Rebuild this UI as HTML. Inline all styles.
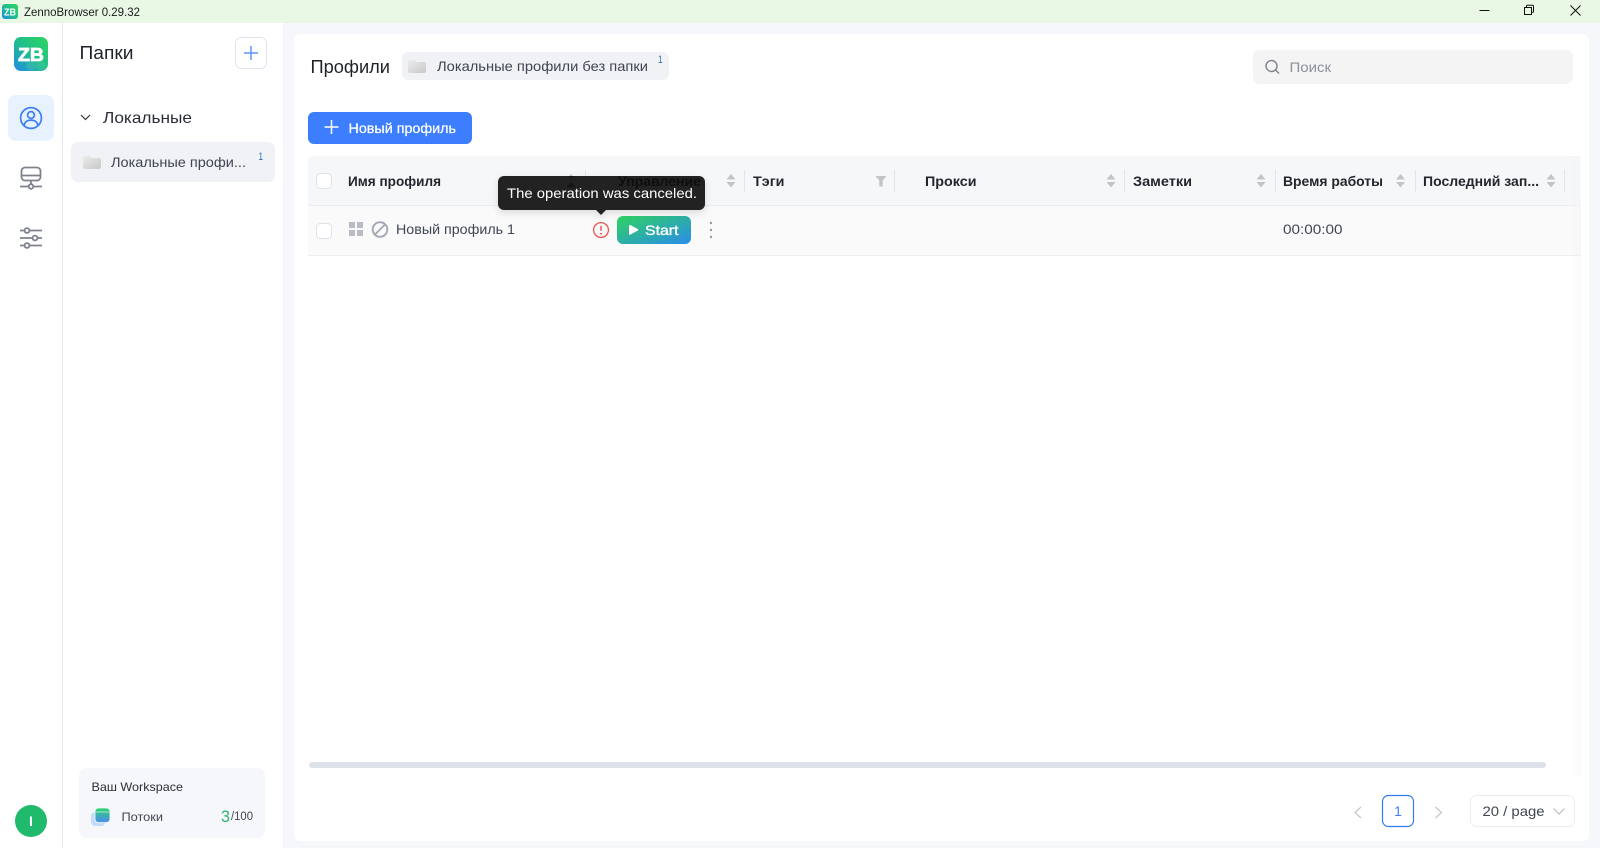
<!DOCTYPE html>
<html lang="ru">
<head>
<meta charset="utf-8">
<title>ZennoBrowser</title>
<style>
html,body{margin:0;padding:0;width:1600px;height:848px;overflow:hidden;background:#f6f7fa}
svg{display:block}
text{font-family:"Liberation Sans",sans-serif;white-space:pre}
</style>
</head>
<body>
<svg xmlns="http://www.w3.org/2000/svg" width="1600" height="848" viewBox="0 0 1600 848">
<defs>
<linearGradient id="lg" x1="1" y1="0" x2="0" y2="1"><stop offset="0" stop-color="#2fd65f"/><stop offset=".5" stop-color="#1fbf8a"/><stop offset="1" stop-color="#1f8ae8"/></linearGradient>
<linearGradient id="fo" x1="0" y1="0" x2="1" y2="1"><stop offset="0" stop-color="#ececec"/><stop offset="1" stop-color="#c8c8c8"/></linearGradient>
<linearGradient id="st" x1="0" y1="0" x2="1" y2="1"><stop offset="0" stop-color="#2fd35f"/><stop offset="1" stop-color="#2a8cec"/></linearGradient>
<linearGradient id="th" x1="0" y1="0" x2="0" y2="1"><stop offset="0" stop-color="#2bd46a"/><stop offset="1" stop-color="#4a8df0"/></linearGradient>
<linearGradient id="fade" x1="0" y1="0" x2="1" y2="0"><stop offset="0" stop-color="#f2f3f6" stop-opacity="0"/><stop offset="1" stop-color="#eef0f3"/></linearGradient>
<filter id="sh" x="-10%" y="-30%" width="120%" height="170%"><feDropShadow dx="0" dy="3" stdDeviation="4" flood-color="#000" flood-opacity=".12"/></filter>
</defs>

<!-- title bar -->
<rect width="1600" height="23" fill="#e9f8e4"/>
<rect x="2" y="4" width="16" height="15" rx="3" fill="url(#lg)"/>
<text x="4" y="15.500" font-size="10.500" font-weight="700" fill="#fff" textLength="12" lengthAdjust="spacingAndGlyphs">ZB</text>
<text x="24" y="16" font-size="12" fill="#1b1b1b" textLength="116" lengthAdjust="spacingAndGlyphs">ZennoBrowser 0.29.32</text>
<path d="M1479.500 10.500h10" stroke="#111" stroke-width="1" fill="none"/>
<path d="M1524.500 7.500h7v7h-7zM1526.500 7.500v-1.500q0-.7.7-.7h5.200q1.100 0 1.100 1.100v5.200q0 .7-.7.7h-1.300" stroke="#111" stroke-width="1" fill="none"/>
<path d="M1570.500 5.500l10 10M1580.500 5.500l-10 10" stroke="#111" stroke-width="1" fill="none"/>

<!-- left nav -->
<rect x="0" y="23" width="62" height="825" fill="#fff"/>
<rect x="62" y="23" width="1" height="825" fill="#e6e8ec"/>
<rect x="14" y="37" width="34" height="34" rx="7" fill="url(#lg)"/>
<circle cx="31" cy="66" r="5" fill="#fff" opacity=".08"/><circle cx="41" cy="66" r="5" fill="#fff" opacity=".08"/>
<text x="18" y="61" font-size="18" font-weight="700" fill="#fff" stroke="#fff" stroke-width=".7" textLength="26" lengthAdjust="spacingAndGlyphs">ZB</text>
<rect x="8" y="95" width="46" height="46" rx="8" fill="#e8f1fe"/>
<g fill="none" stroke="#3d7ef5" stroke-width="1.700">
<circle cx="31" cy="118" r="10.400"/>
<circle cx="31" cy="115" r="3.400"/>
<path d="M24 125.500c.6-3.600 3.400-5.400 7-5.400s6.400 1.800 7 5.400"/>
</g>
<g fill="none" stroke="#7d828c" stroke-width="1.800">
<rect x="21.500" y="167.500" width="19" height="13" rx="3.500"/>
<path d="M22 175.500h18M31 181v3M20 186.500h8M34 186.500h8"/>
<circle cx="31" cy="186.500" r="2.300"/>
<path d="M20 230.500h4.500M29.500 230.500h12.500M20 238h12.500M37.500 238h4.500M20 245.500h4.500M29.500 245.500h12.500"/>
<circle cx="27" cy="230.500" r="2.400"/><circle cx="35" cy="238" r="2.400"/><circle cx="27" cy="245.500" r="2.400"/>
</g>
<circle cx="31" cy="821" r="16" fill="#1fba6c"/>
<text x="31" y="826" font-size="14" font-weight="700" fill="#fff" text-anchor="middle">I</text>

<!-- folders panel -->
<rect x="63" y="23" width="220" height="825" fill="#fff"/>
<text x="79.500" y="59" font-size="18" fill="#1f2329" textLength="54" lengthAdjust="spacingAndGlyphs">Папки</text>
<rect x="235.500" y="37.500" width="31" height="31" rx="6" fill="#fff" stroke="#dfe4f1"/>
<path d="M251 46v14M244 53h14" stroke="#5f96f5" stroke-width="1.500" fill="none"/>
<path d="M81 115l4.500 4.500 4.500-4.500" stroke="#333" stroke-width="1.200" fill="none"/>
<text x="103" y="123" font-size="16" fill="#2a2e36" textLength="89" lengthAdjust="spacingAndGlyphs">Локальные</text>
<rect x="71" y="142" width="204" height="40" rx="7" fill="#f1f2f6"/>
<path d="M83 158q0-2 2-2h4.500l2 2h7.500q2 0 2 2v7q0 2-2 2h-14q-2 0-2-2z" fill="url(#fo)"/>
<text x="111" y="167" font-size="14" fill="#3f4552" textLength="135" lengthAdjust="spacingAndGlyphs">Локальные профи...</text>
<text x="258.500" y="160" font-size="11" fill="#2a6aa8" textLength="4.500" lengthAdjust="spacingAndGlyphs">1</text>

<rect x="79" y="768" width="186" height="70" rx="8" fill="#f5f7fa"/>
<text x="91.500" y="791" font-size="12" fill="#2b2f38" textLength="91.500" lengthAdjust="spacingAndGlyphs">Ваш Workspace</text>
<rect x="91" y="812" width="14" height="14" rx="4" fill="#c3dcfa"/>
<rect x="95" y="808" width="15" height="14.500" rx="3.500" fill="url(#th)" stroke="#f5f7fa" stroke-width=".8"/>
<rect x="95.500" y="811.500" width="14" height="1" fill="#fff" opacity=".6"/>
<text x="121.500" y="821" font-size="12" fill="#3f4552" textLength="41.500" lengthAdjust="spacingAndGlyphs">Потоки</text>
<text x="221" y="822" font-size="17" fill="#2cb36a" textLength="9" lengthAdjust="spacingAndGlyphs">3</text>
<text x="231" y="820" font-size="11.500" fill="#3f4552" textLength="22" lengthAdjust="spacingAndGlyphs">/100</text>

<!-- main card -->
<rect x="294" y="34" width="1295" height="807" rx="7" fill="#fff"/>
<text x="310.500" y="73" font-size="18" fill="#1f2329" textLength="79.500" lengthAdjust="spacingAndGlyphs">Профили</text>
<rect x="402" y="52" width="267" height="28" rx="6" fill="#f1f2f6"/>
<path d="M408 62q0-2 2-2h4.500l2 2h7.500q2 0 2 2v7q0 2-2 2h-14q-2 0-2-2z" fill="url(#fo)"/>
<text x="437" y="71" font-size="14" fill="#3f4552" textLength="211" lengthAdjust="spacingAndGlyphs">Локальные профили без папки</text>
<text x="658" y="63" font-size="11" fill="#2a6aa8" textLength="4.500" lengthAdjust="spacingAndGlyphs">1</text>

<rect x="1253" y="50" width="320" height="34" rx="7" fill="#f4f4f5"/>
<circle cx="1271.500" cy="66" r="5.500" fill="none" stroke="#7d828c" stroke-width="1.400"/>
<path d="M1275.500 70l3.500 3.500" stroke="#7d828c" stroke-width="1.400" fill="none"/>
<text x="1289.500" y="72" font-size="14" fill="#8b909b" textLength="41.500" lengthAdjust="spacingAndGlyphs">Поиск</text>

<rect x="308" y="112" width="164" height="32" rx="6" fill="#3d7eff"/>
<path d="M331.500 120v14M324.500 127h14" stroke="#fff" stroke-width="1.500" fill="none"/>
<text x="348.500" y="133" font-size="14" fill="#fff" stroke="#fff" stroke-width=".25" textLength="107.500" lengthAdjust="spacingAndGlyphs">Новый профиль</text>

<!-- table -->
<path d="M308 206v-44q0-6 6-6h1266v50z" fill="#f6f7f9"/>
<rect x="308" y="205" width="1273" height="1" fill="#eceef1"/>
<rect x="308" y="206" width="1273" height="49" fill="#fafafb"/>
<rect x="308" y="255" width="1273" height="1" fill="#eceef1"/>
<rect x="1570" y="156" width="11" height="620" fill="url(#fade)" opacity=".35"/>

<rect x="316.500" y="173.500" width="15" height="15" rx="4" fill="#fff" stroke="#dfe2ea"/>
<rect x="316.500" y="223.500" width="15" height="15" rx="4" fill="#fff" stroke="#dfe2ea"/>

<g font-size="14" font-weight="700" fill="#23262d">
<text x="348" y="186" textLength="93" lengthAdjust="spacingAndGlyphs">Имя профиля</text>
<text x="753" y="186" textLength="31.500" lengthAdjust="spacingAndGlyphs">Тэги</text>
<text x="925" y="186" textLength="51.500" lengthAdjust="spacingAndGlyphs">Прокси</text>
<text x="1133" y="186" textLength="59" lengthAdjust="spacingAndGlyphs">Заметки</text>
<text x="1283" y="186" textLength="100" lengthAdjust="spacingAndGlyphs">Время работы</text>
<text x="1423" y="186" textLength="116" lengthAdjust="spacingAndGlyphs">Последний зап...</text>
</g>

<g fill="#e2e4e9">
<rect x="585" y="170" width="1" height="22"/><rect x="744" y="170" width="1" height="22"/>
<rect x="894" y="170" width="1" height="22"/><rect x="1124" y="170" width="1" height="22"/>
<rect x="1275" y="170" width="1" height="22"/><rect x="1415" y="170" width="1" height="22"/>
<rect x="1564" y="170" width="1" height="22"/>
</g>
<g fill="#c2c4ca">
<path d="M571 174l4.500 5.500h-9zM571 187.500l4.500-5.500h-9z"/>
<path d="M731 174l4.500 5.500h-9zM731 187.500l4.500-5.500h-9z"/>
<path d="M1111 174l4.500 5.500h-9zM1111 187.500l4.500-5.500h-9z"/>
<path d="M1261 174l4.500 5.500h-9zM1261 187.500l4.500-5.500h-9z"/>
<path d="M1400.500 174l4.500 5.500h-9zM1400.500 187.500l4.500-5.500h-9z"/>
<path d="M1551 174l4.500 5.500h-9zM1551 187.500l4.500-5.500h-9z"/>
<path d="M875.500 176h11l-3.800 4.500v6h-3.400v-6z"/>
</g>

<!-- row -->
<g fill="#b9bcc6">
<rect x="349" y="222" width="6" height="6"/><rect x="357" y="222" width="6" height="6"/>
<rect x="349" y="230" width="6" height="6"/><rect x="357" y="230" width="6" height="6"/>
</g>
<circle cx="380" cy="229.500" r="7.300" fill="none" stroke="#a3a8b5" stroke-width="1.900"/>
<path d="M375 234.500l10-10" stroke="#a3a8b5" stroke-width="1.800" fill="none"/>
<text x="396" y="234" font-size="14" fill="#3f4552" textLength="119" lengthAdjust="spacingAndGlyphs">Новый профиль 1</text>
<circle cx="601" cy="230" r="7.400" fill="none" stroke="#ef5350" stroke-width="1.300"/>
<path d="M601 225.800v5" stroke="#ef5350" stroke-width="1.500" fill="none"/>
<circle cx="601" cy="233.700" r=".95" fill="#ef5350"/>
<rect x="617" y="216" width="74" height="28" rx="6" fill="url(#st)"/>
<path d="M629 226q0-1.700 1.500-.9l7 3.800q1.300.9 0 1.800l-7 3.800q-1.500.8-1.500-.9z" fill="#fff"/>
<text x="645" y="235" font-size="14" fill="#fff" stroke="#fff" stroke-width=".35" textLength="33.500" lengthAdjust="spacingAndGlyphs">Start</text>
<g fill="#94989f"><circle cx="711" cy="223" r="1.200"/><circle cx="711" cy="230" r="1.200"/><circle cx="711" cy="237" r="1.200"/></g>
<text x="1283" y="234" font-size="14" fill="#3f4552" textLength="59.500" lengthAdjust="spacingAndGlyphs">00:00:00</text>

<!-- tooltip -->
<g filter="url(#sh)">
<rect x="498" y="176" width="207" height="34" rx="6" fill="#222"/>
<path d="M596 210h10l-5 5z" fill="#222"/>
</g>
<text x="618" y="186" font-size="14" font-weight="700" fill="#0e0e0e" textLength="83" lengthAdjust="spacingAndGlyphs">Управление</text>
<path d="M566.500 187.500h9l-4.500-5.500zM567.800 177.500h6.400l-1.500-1.500h-3.400z" fill="#151515"/>
<text x="507" y="198" font-size="14" fill="#fff" textLength="190" lengthAdjust="spacingAndGlyphs">The operation was canceled.</text>

<!-- scrollbar -->
<rect x="309" y="762" width="1237" height="6" rx="3" fill="#dde1ea"/>

<!-- pagination -->
<path d="M1361 807l-6 5.500 6 5.500" stroke="#c4c6ca" stroke-width="1.200" fill="none"/>
<rect x="1382.500" y="795.500" width="31" height="31" rx="6" fill="#fff" stroke="#2f7bf6" stroke-width="1.200"/>
<text x="1398" y="816" font-size="14" fill="#3d7eff" text-anchor="middle">1</text>
<path d="M1435.500 807l6 5.500-6 5.500" stroke="#c4c6ca" stroke-width="1.200" fill="none"/>
<rect x="1470.500" y="795.500" width="104" height="31" rx="6" fill="#fff" stroke="#ebedf0"/>
<text x="1482.500" y="816" font-size="14" fill="#3f4552" textLength="62" lengthAdjust="spacingAndGlyphs">20 / page</text>
<path d="M1553.500 808.500l5.500 5.500 5.500-5.500" stroke="#b9bcc3" stroke-width="1.200" fill="none"/>
</svg>
</body>
</html>
